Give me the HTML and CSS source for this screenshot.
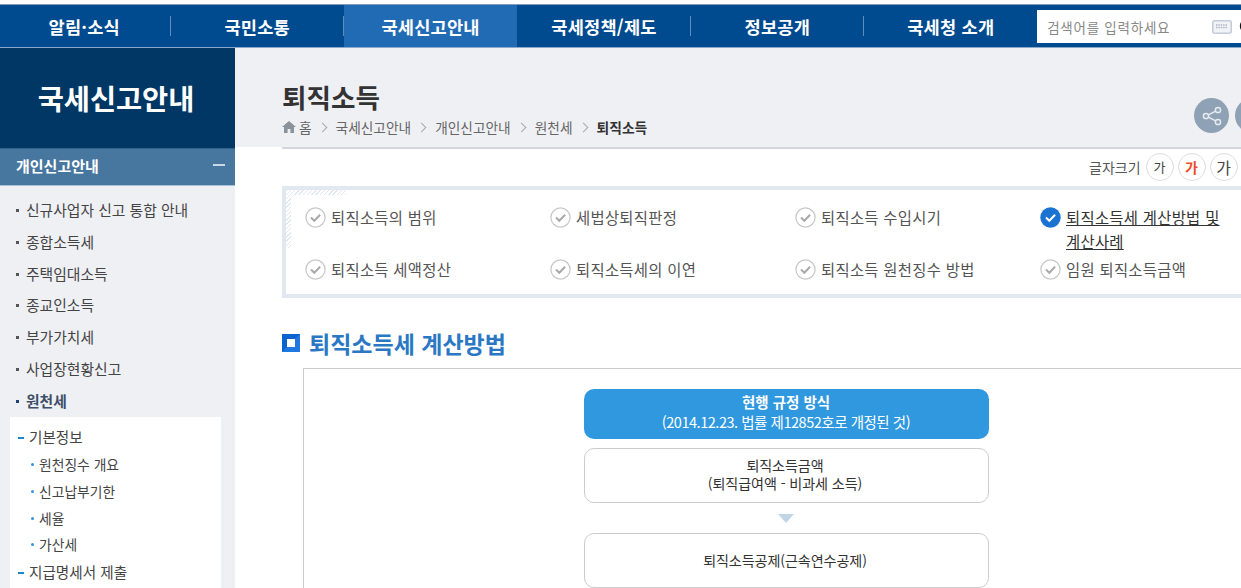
FILE: index.html
```html
<!DOCTYPE html>
<html lang="ko">
<head>
<meta charset="utf-8">
<title>퇴직소득</title>
<link rel="stylesheet" href="styles.css">
</head>
<body>
<div class="page">
  <header class="topbar">
    <nav class="gnb">
      <a class="gnb-item first">알림·소식</a>
      <a class="gnb-item">국민소통</a>
      <a class="gnb-item active">국세신고안내</a>
      <a class="gnb-item">국세정책/제도</a>
      <a class="gnb-item">정보공개</a>
      <a class="gnb-item last">국세청 소개</a>
    </nav>
    <div class="search">
      <span class="search-ph">검색어를 입력하세요</span>
      <svg class="kbd" width="20" height="14" viewBox="0 0 20 14"><rect x="0.75" y="0.75" width="18.5" height="12.5" rx="2" fill="#f1f3f7" stroke="#c3cbd8" stroke-width="1.5"/><path d="M4 5h12M4 7.5h12" stroke="#aab3c2" stroke-width="1.4" stroke-dasharray="1.4 1"/></svg>
      <svg class="glass" width="16" height="18" viewBox="0 0 16 18"><circle cx="9" cy="8" r="6" fill="none" stroke="#111" stroke-width="2.4"/></svg>
    </div>
  </header>
  <div class="layout">
    <aside class="side">
      <div class="side-title">국세신고안내</div>
      <div class="side-group"><span>개인신고안내</span><i class="side-minus"></i></div>
      <ul class="menu">
        <li>신규사업자 신고 통합 안내</li>
        <li>종합소득세</li>
        <li>주택임대소득</li>
        <li>종교인소득</li>
        <li>부가가치세</li>
        <li>사업장현황신고</li>
        <li class="on">원천세</li>
      </ul>
      <div class="submenu">
        <div class="sub-head">기본정보</div>
        <ul class="sub-list">
          <li>원천징수 개요</li>
          <li>신고납부기한</li>
          <li>세율</li>
          <li>가산세</li>
        </ul>
        <div class="sub-head">지급명세서 제출</div>
      </div>
    </aside>
    <main class="main">
      <div class="head">
        <h1>퇴직소득</h1>
        <div class="crumbs">
          <svg class="home" width="14" height="12" viewBox="0 0 14 12"><path d="M7 0 0 6h2v6h3.6V8h2.8v4H12V6h2z" fill="#8b929c"/></svg>
          <span class="c-home">홈</span><i class="chev"></i>
          <span>국세신고안내</span><i class="chev"></i>
          <span>개인신고안내</span><i class="chev"></i>
          <span>원천세</span><i class="chev"></i>
          <b>퇴직소득</b>
        </div>
        <div class="round-btns">
          <span class="round"><svg width="22" height="22" viewBox="0 0 22 22" fill="none" stroke="#e6ebf0" stroke-width="1.5"><circle cx="17" cy="5" r="2.6"/><circle cx="5" cy="11" r="2.6"/><circle cx="17" cy="17" r="2.6"/><path d="M7.4 9.8 14.7 6.2M7.4 12.2l7.3 3.6"/></svg></span>
          <span class="round"></span>
        </div>
      </div>
      <div class="content">
        <div class="fontsize">
          <span class="fs-label">글자크기</span>
          <span class="fs-btn">가</span>
          <span class="fs-btn mid">가</span>
          <span class="fs-btn big">가</span>
        </div>
        <div class="toc">
          <i class="toc-hatch-h"></i><i class="toc-hatch-v"></i>
          <a class="toc-item"><svg class="chk" width="21" height="21" viewBox="0 0 21 21"><circle cx="10.5" cy="10.5" r="9.6" fill="#fff" stroke="#c9c9c9" stroke-width="1.3"/><path d="M6 10.5l3.3 3.3 5.8-6" fill="none" stroke="#a9a9a9" stroke-width="2"/></svg><span>퇴직소득의 범위</span></a>
          <a class="toc-item"><svg class="chk" width="21" height="21" viewBox="0 0 21 21"><circle cx="10.5" cy="10.5" r="9.6" fill="#fff" stroke="#c9c9c9" stroke-width="1.3"/><path d="M6 10.5l3.3 3.3 5.8-6" fill="none" stroke="#a9a9a9" stroke-width="2"/></svg><span>세법상퇴직판정</span></a>
          <a class="toc-item"><svg class="chk" width="21" height="21" viewBox="0 0 21 21"><circle cx="10.5" cy="10.5" r="9.6" fill="#fff" stroke="#c9c9c9" stroke-width="1.3"/><path d="M6 10.5l3.3 3.3 5.8-6" fill="none" stroke="#a9a9a9" stroke-width="2"/></svg><span>퇴직소득 수입시기</span></a>
          <a class="toc-item current"><svg class="chk" width="21" height="21" viewBox="0 0 21 21"><circle cx="10.5" cy="10.5" r="10.2" fill="#1a73d0"/><path d="M6 10.5l3.3 3.3 5.8-6" fill="none" stroke="#fff" stroke-width="2"/></svg><span>퇴직소득세 계산방법 및 계산사례</span></a>
          <a class="toc-item"><svg class="chk" width="21" height="21" viewBox="0 0 21 21"><circle cx="10.5" cy="10.5" r="9.6" fill="#fff" stroke="#c9c9c9" stroke-width="1.3"/><path d="M6 10.5l3.3 3.3 5.8-6" fill="none" stroke="#a9a9a9" stroke-width="2"/></svg><span>퇴직소득 세액정산</span></a>
          <a class="toc-item"><svg class="chk" width="21" height="21" viewBox="0 0 21 21"><circle cx="10.5" cy="10.5" r="9.6" fill="#fff" stroke="#c9c9c9" stroke-width="1.3"/><path d="M6 10.5l3.3 3.3 5.8-6" fill="none" stroke="#a9a9a9" stroke-width="2"/></svg><span>퇴직소득세의 이연</span></a>
          <a class="toc-item"><svg class="chk" width="21" height="21" viewBox="0 0 21 21"><circle cx="10.5" cy="10.5" r="9.6" fill="#fff" stroke="#c9c9c9" stroke-width="1.3"/><path d="M6 10.5l3.3 3.3 5.8-6" fill="none" stroke="#a9a9a9" stroke-width="2"/></svg><span>퇴직소득 원천징수 방법</span></a>
          <a class="toc-item"><svg class="chk" width="21" height="21" viewBox="0 0 21 21"><circle cx="10.5" cy="10.5" r="9.6" fill="#fff" stroke="#c9c9c9" stroke-width="1.3"/><path d="M6 10.5l3.3 3.3 5.8-6" fill="none" stroke="#a9a9a9" stroke-width="2"/></svg><span>임원 퇴직소득금액</span></a>
        </div>
        <h2 class="sec-title"><i class="sec-mark"></i>퇴직소득세 계산방법</h2>
        <div class="flow">
          <div class="step primary"><strong>현행 규정 방식</strong><br><span class="step-sub">(2014.12.23. 법률 제12852호로 개정된 것)</span></div>
          <div class="step">퇴직소득금액<br>(퇴직급여액 - 비과세 소득)</div>
          <i class="arrow"></i>
          <div class="step tall">퇴직소득공제(근속연수공제)</div>
        </div>
      </div>
    </main>
  </div>
</div>
</body>
</html>
```
FILE: styles.css
```css
* { box-sizing: border-box; }
html, body { margin: 0; padding: 0; height: 100%; overflow: hidden; background: #fff; }
body { font-family: "Noto Sans CJK KR", "Noto Sans", sans-serif; color: #333; }
ul { list-style: none; margin: 0; padding: 0; }
.page { width: 1241px; height: 588px; overflow: hidden; padding-top: 4px; }

.topbar { display: flex; width: 1400px; height: 44px; background: #004b8f; border-top: 1px solid #7f9cbd; border-bottom: 1px solid #8ba9cb; }
.gnb { display: flex; height: 42px; }
.gnb-item { position: relative; width: 173.4px; display: flex; align-items: center; justify-content: center; color: #fff; font-size: 17.6px; font-weight: 700; letter-spacing: 0.2px; }
.gnb-item.first { width: 170.5px; padding-right: 2px; }
.gnb-item::after { content: ""; position: absolute; right: 0; top: 11px; height: 20px; width: 1px; background: #5f8db8; }
.gnb-item.active { background: #206bb3; }
.gnb-item.active::after, .gnb-item.last::after { display: none; }
.search { display: flex; align-items: center; width: 300px; height: 33px; margin-top: 5px; margin-left: -0.3px; background: #fff; padding-left: 10px; }
.search-ph { font-size: 13.5px; color: #888; letter-spacing: 0.75px; width: 165px; }
.kbd { flex: none; margin-right: 6px; }
.glass { flex: none; }

.layout { display: flex; height: 540px; }
.side { width: 235px; flex: none; background: #eff0f4; }
.side-title { height: 100px; background: #003764; color: #fff; font-size: 28.4px; font-weight: 700; display: flex; align-items: center; justify-content: center; padding: 0 3px 2px 0; }
.side-group { height: 38px; background: #47769f; border-bottom: 1px solid #a9c0d6; border-top: 1px solid #35628a; color: #fff; font-size: 15px; font-weight: 700; display: flex; align-items: center; justify-content: space-between; padding: 0 10px 3px 16px; }
.side-minus { width: 12px; height: 2px; background: #c9d8e6; margin-bottom: 2px; }
.menu { padding-top: 8px; margin-bottom: 1px; }
.menu li { position: relative; height: 31.75px; line-height: 31px; padding-left: 26px; font-size: 14.8px; color: #444; }
.menu li::before { content: ""; position: absolute; left: 16px; top: 15px; width: 3px; height: 3px; background: #555; }
.menu li.on { font-weight: 700; color: #3e4d68; }
.menu li.on::before { background: #23406e; }
.submenu { margin: 0 14px 0 10px; background: #fff; padding-top: 5px; height: 200px; }
.sub-head { position: relative; height: 30px; line-height: 30px; padding-left: 19px; font-size: 14.6px; color: #444; }
.sub-head::before { content: ""; position: absolute; left: 8px; top: 15px; width: 6px; height: 2px; background: #1d85c9; }
.sub-list { margin: -1px 0 -1px; }
.sub-list li { position: relative; height: 26.7px; line-height: 26px; padding-left: 29px; font-size: 13.8px; color: #444; }
.sub-list li::before { content: ""; position: absolute; left: 21px; top: 12px; width: 3px; height: 3px; background: #2f96dd; border-radius: 50%; }

.main { flex: none; width: 1006px; }
.head { position: relative; height: 99px; background: #eff0f4; padding: 32px 0 0 47px; }
.head h1 { margin: 0; font-size: 26.6px; line-height: 33px; font-weight: 700; color: #333; }
.crumbs { display: flex; align-items: center; height: 20px; margin-top: 4px; font-size: 13.7px; color: #666; }
.crumbs b { color: #333; font-size: 13.8px; font-weight: 700; }
.home { margin-right: 3px; }
.chev { width: 7px; height: 7px; border-top: 1px solid #aaa; border-right: 1px solid #aaa; transform: rotate(45deg); margin: 0 10px 0 7px; }
.round-btns { position: absolute; left: 959px; top: 50px; display: flex; gap: 6px; }
.round { width: 35px; height: 35px; border-radius: 50%; background: #8fa2b5; display: flex; align-items: center; justify-content: center; flex: none; }

.content { border-top: 2px solid #d3d6dc; margin-left: 47px; width: 1000px; background: #fff; }
.fontsize { display: flex; justify-content: flex-start; align-items: center; height: 37px; padding: 0 0 2px 807px; gap: 4px; }
.fs-label { font-size: 14px; color: #555; margin-right: 1px; }
.fs-btn { width: 28px; height: 28px; border: 1px solid #ddd; border-radius: 50%; display: flex; align-items: center; justify-content: center; font-size: 13px; color: #444; flex: none; }
.fs-btn.mid { color: #ee4b2b; font-weight: 700; font-size: 14px; }
.fs-btn.big { font-size: 16px; }

.toc { position: relative; display: grid; grid-template-columns: 245px 245px 245px 245px; grid-template-rows: 52px 44px; width: 1000px; height: 112px; border: 4px solid #e2e8f0; padding: 3px 0 0 19px; }
.toc-hatch-h { position: absolute; left: 0; top: 0; width: 60px; height: 5px; background: repeating-linear-gradient(135deg, #e3e8ef 0 1px, #fff 1px 3px); }
.toc-hatch-v { position: absolute; left: 0; top: 0; width: 5px; height: 58px; background: repeating-linear-gradient(135deg, #e3e8ef 0 1px, #fff 1px 3px); }
.toc-item { display: flex; align-items: flex-start; font-size: 15.4px; letter-spacing: 0.28px; line-height: 24px; color: #555; padding-top: 12px; }
.chk { flex: none; margin: 2px 5px 0 0; }
.toc-item.current { color: #333; }
.toc-item.current span { text-decoration: underline; width: 170px; word-break: keep-all; }
.sec-title { display: flex; align-items: center; margin: 27px 0 0; height: 36px; font-size: 23px; font-weight: 700; color: #2a78c4; }
.sec-mark { width: 18px; height: 18px; margin-right: 9px; background: #fff; border: 5px solid #0a63d0; border-right-color: #1e78e0; border-bottom-color: #1e78e0; flex: none; }
.flow { display: flex; flex-direction: column; align-items: center; width: 966px; margin: 7px 0 0 21px; padding: 20px 0 0; border: 1px solid #ccc; border-bottom: 0; height: 300px; }
.step { width: 405px; height: 55px; border: 1.5px solid #ccc; border-radius: 10px; text-align: center; font-size: 14.1px; letter-spacing: -0.1px; line-height: 18px; color: #333; padding: 7px 2px 0 0; background: #fff; flex: none; }
.step.primary { background: #2f98de; border: 0; color: #fff; height: 50px; padding: 3px 0 0; margin-bottom: 9px; font-size: 14.5px; line-height: 20px; letter-spacing: 0; }
.step-sub { letter-spacing: -0.47px; }
.step.tall { line-height: 52px; padding: 0 2px 0 0; }
.arrow { width: 0; height: 0; margin: 11px 0 10px; border-left: 8px solid transparent; border-right: 8px solid transparent; border-top: 9px solid #c2d5e4; flex: none; }
```
